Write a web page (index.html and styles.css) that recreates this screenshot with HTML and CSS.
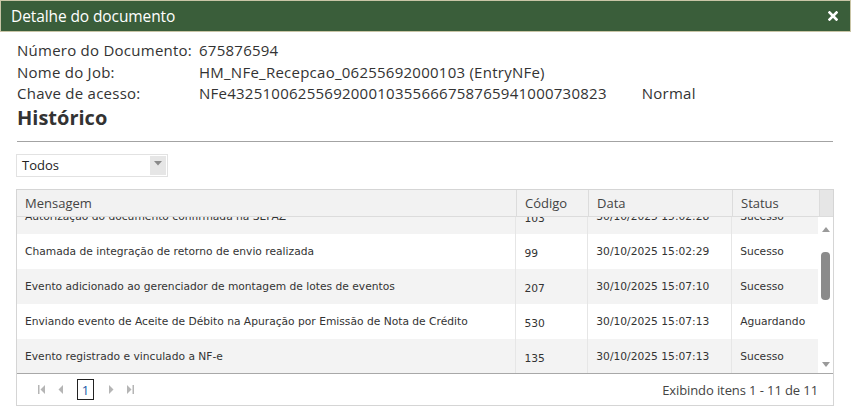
FILE: index.html
```html
<!DOCTYPE html>
<html lang="pt">
<head>
<meta charset="utf-8">
<link rel="stylesheet" href="styles.css">
</head>
<body>
<div class="window">
  <div class="titlebar">
    <span class="title">Detalhe do documento</span>
    <svg class="close" width="10" height="10" viewBox="0 0 10 10"><path d="M1.5 1.5L8.5 8.5M8.5 1.5L1.5 8.5" stroke="#fff" stroke-width="2.6" stroke-linecap="square"/></svg>
  </div>
  <div class="content">
    <div class="info">
      <div class="label">Número do Documento:</div><div class="value">675876594</div>
      <div class="label">Nome do Job:</div><div class="value">HM_NFe_Recepcao_06255692000103 (EntryNFe)</div>
      <div class="label">Chave de acesso:</div><div class="value">NFe43251006255692000103556667587659410007308​23<span class="mode">Normal</span></div>
    </div>
    <h2 class="heading">Histórico</h2>
    <hr class="rule">
    <div class="select">
      <span class="select-text">Todos</span>
      <span class="select-arrow"><svg width="8" height="5" viewBox="0 0 8 5"><path d="M0 0H8L4 4.5Z" fill="#8a8a8a"/></svg></span>
    </div>
    <div class="grid">
      <div class="grid-head">
        <div class="hcell c-msg">Mensagem</div>
        <div class="hcell c-cod">Código</div>
        <div class="hcell c-data">Data</div>
        <div class="hcell c-status">Status</div>
        <div class="hcell c-sb"></div>
      </div>
      <div class="grid-body">
        <div class="rows">
          <div class="rows-inner">
            <div class="row alt"><div class="cell c-msg">Autorização do documento confirmada na SEFAZ</div><div class="cell c-cod">103</div><div class="cell c-data">30/10/2025 15:02:28</div><div class="cell c-status">Sucesso</div></div>
            <div class="row"><div class="cell c-msg">Chamada de integração de retorno de envio realizada</div><div class="cell c-cod">99</div><div class="cell c-data">30/10/2025 15:02:29</div><div class="cell c-status">Sucesso</div></div>
            <div class="row alt"><div class="cell c-msg">Evento adicionado ao gerenciador de montagem de lotes de eventos</div><div class="cell c-cod">207</div><div class="cell c-data">30/10/2025 15:07:10</div><div class="cell c-status">Sucesso</div></div>
            <div class="row"><div class="cell c-msg">Enviando evento de Aceite de Débito na Apuração por Emissão de Nota de Crédito</div><div class="cell c-cod">530</div><div class="cell c-data">30/10/2025 15:07:13</div><div class="cell c-status">Aguardando</div></div>
            <div class="row alt"><div class="cell c-msg">Evento registrado e vinculado a NF-e</div><div class="cell c-cod">135</div><div class="cell c-data">30/10/2025 15:07:13</div><div class="cell c-status">Sucesso</div></div>
            <div class="row"><div class="cell c-msg">Processo finalizado</div><div class="cell c-cod">100</div><div class="cell c-data">30/10/2025 15:07:14</div><div class="cell c-status">Sucesso</div></div>
          </div>
        </div>
        <div class="scrollbar">
          <svg class="sb-up" width="8" height="5" viewBox="0 0 8 5"><path d="M0 5H8L4 0Z" fill="#9a9a9a"/></svg>
          <div class="sb-track"><div class="sb-thumb"></div></div>
          <svg class="sb-down" width="8" height="5" viewBox="0 0 8 5"><path d="M0 0H8L4 5Z" fill="#9a9a9a"/></svg>
        </div>
      </div>
      <div class="pager">
        <div class="pager-nav">
          <svg class="pg" width="7" height="9" viewBox="0 0 7 9"><rect x="0" y="0" width="1.5" height="9" fill="#b5b5b5"/><path d="M7 0V9L2.5 4.5Z" fill="#b5b5b5"/></svg>
          <svg class="pg" width="5" height="9" viewBox="0 0 5 9"><path d="M5 0V9L0.5 4.5Z" fill="#b5b5b5"/></svg>
          <span class="page">1</span>
          <svg class="pg" width="5" height="9" viewBox="0 0 5 9"><path d="M0 0V9L4.5 4.5Z" fill="#b5b5b5"/></svg>
          <svg class="pg" width="7" height="9" viewBox="0 0 7 9"><path d="M0 0V9L4.5 4.5Z" fill="#b5b5b5"/><rect x="5.5" y="0" width="1.5" height="9" fill="#b5b5b5"/></svg>
        </div>
        <div class="pager-info">Exibindo itens 1 - 11 de 11</div>
      </div>
    </div>
  </div>
</div>
</body>
</html>
```
FILE: styles.css
```css
* { box-sizing: border-box; }
html, body { margin: 0; padding: 0; background: #fff; }
body { font-family: "Open Sans", "Noto Sans", sans-serif; color: #333; width: 851px; height: 413px; overflow: hidden; }

.titlebar {
  height: 32px;
  background: #3a5e3a;
  border: 1px solid #c9c5a6;
  display: flex;
  align-items: center;
  justify-content: space-between;
  padding: 0 12px 0 10px;
}
.title { color: #fff; font-size: 15.5px; letter-spacing: -0.1px; }
.close { display: block; }

.content { padding: 8px 18px 0 16px; }

.info {
  display: grid;
  grid-template-columns: 182px 1fr;
  font-size: 15px;
  line-height: 21.5px;
  color: #333;
  padding-left: 1px;
  letter-spacing: 0.25px;
}
.mode { margin-left: 35px; }

.heading {
  margin: 0 0 0 1px;
  font-size: 20px;
  font-weight: 700;
  color: #333;
  line-height: 26px;
  letter-spacing: 0;
}
.rule {
  margin: 10px 0 0 1px;
  border: 0;
  border-top: 1px solid #a3a3a3;
  height: 0;
}

.select {
  margin-top: 12px;
  width: 152px;
  height: 23px;
  border: 1px solid #e2e2e2;
  display: flex;
  align-items: center;
  justify-content: space-between;
  padding: 1px 1px 1px 5px;
}
.select-text { font-size: 13px; color: #222; }
.select-arrow {
  width: 16px; height: 19px; background: #e6e6e6;
  display: flex; align-items: center; justify-content: center;
}
.select-arrow svg { display: block; margin-top: -4px; }

.grid {
  margin-top: 12px;
  width: 818px;
  border: 1px solid #d5d5d5;
}
.grid-head { display: flex; height: 27px; background: #f2f2f2; border-bottom: 1px solid #dcdcdc; }
.hcell {
  font-size: 13px; color: #444; padding: 4px 0 0 8px;
  border-left: 1px solid #dcdcdc;
}
.hcell.c-msg { border-left: 0; }
.c-msg { width: 499px; }
.c-cod { width: 72px; }
.c-data { width: 144px; }
.c-status { width: 87px; }
.c-sb { width: 14px; background: #e6e6e6; }

.grid-body { display: flex; height: 157px; border-bottom: 1px solid #a8a8a8; }
.rows { width: 802px; overflow: hidden; }
.rows-inner { margin-top: -18px; }
.row { display: flex; height: 35px; background: #fff; }
.row.alt { background: #f3f3f3; }
.cell {
  font-family: "DejaVu Sans", Verdana, sans-serif;
  font-size: 10.7px;
  color: #333;
  padding: 11px 0 0 8px;
  white-space: nowrap;
  overflow: hidden;
  border-left: 1px solid #e6e6e6;
}
.cell.c-msg { border-left: 0; }
.cell.c-cod { padding-top: 13px; }

.scrollbar {
  width: 15px;
  display: flex; flex-direction: column; align-items: center;
  padding: 10px 0 6px 0;
}
.sb-track { flex: 1; width: 100%; display: flex; justify-content: center; padding-top: 20px; }
.sb-thumb { width: 9px; height: 48px; background: #8b8b8b; border-radius: 4px; }
.sb-up, .sb-down { display: block; }

.pager { display: flex; align-items: center; justify-content: space-between; height: 31px; padding: 1px 15px 0 21px; }
.pager-nav { display: flex; align-items: center; }
.pg { display: block; margin-right: 13px; }
.page {
  display: inline-flex; align-items: center; justify-content: center;
  width: 17px; height: 21px; border: 1px solid #222;
  font-size: 13px; color: #1a5aa8; margin: 0 15px 0 1px;
  font-family: "Open Sans", sans-serif;
}
.pager-info { font-size: 13px; color: #444; letter-spacing: -0.1px; }
```
